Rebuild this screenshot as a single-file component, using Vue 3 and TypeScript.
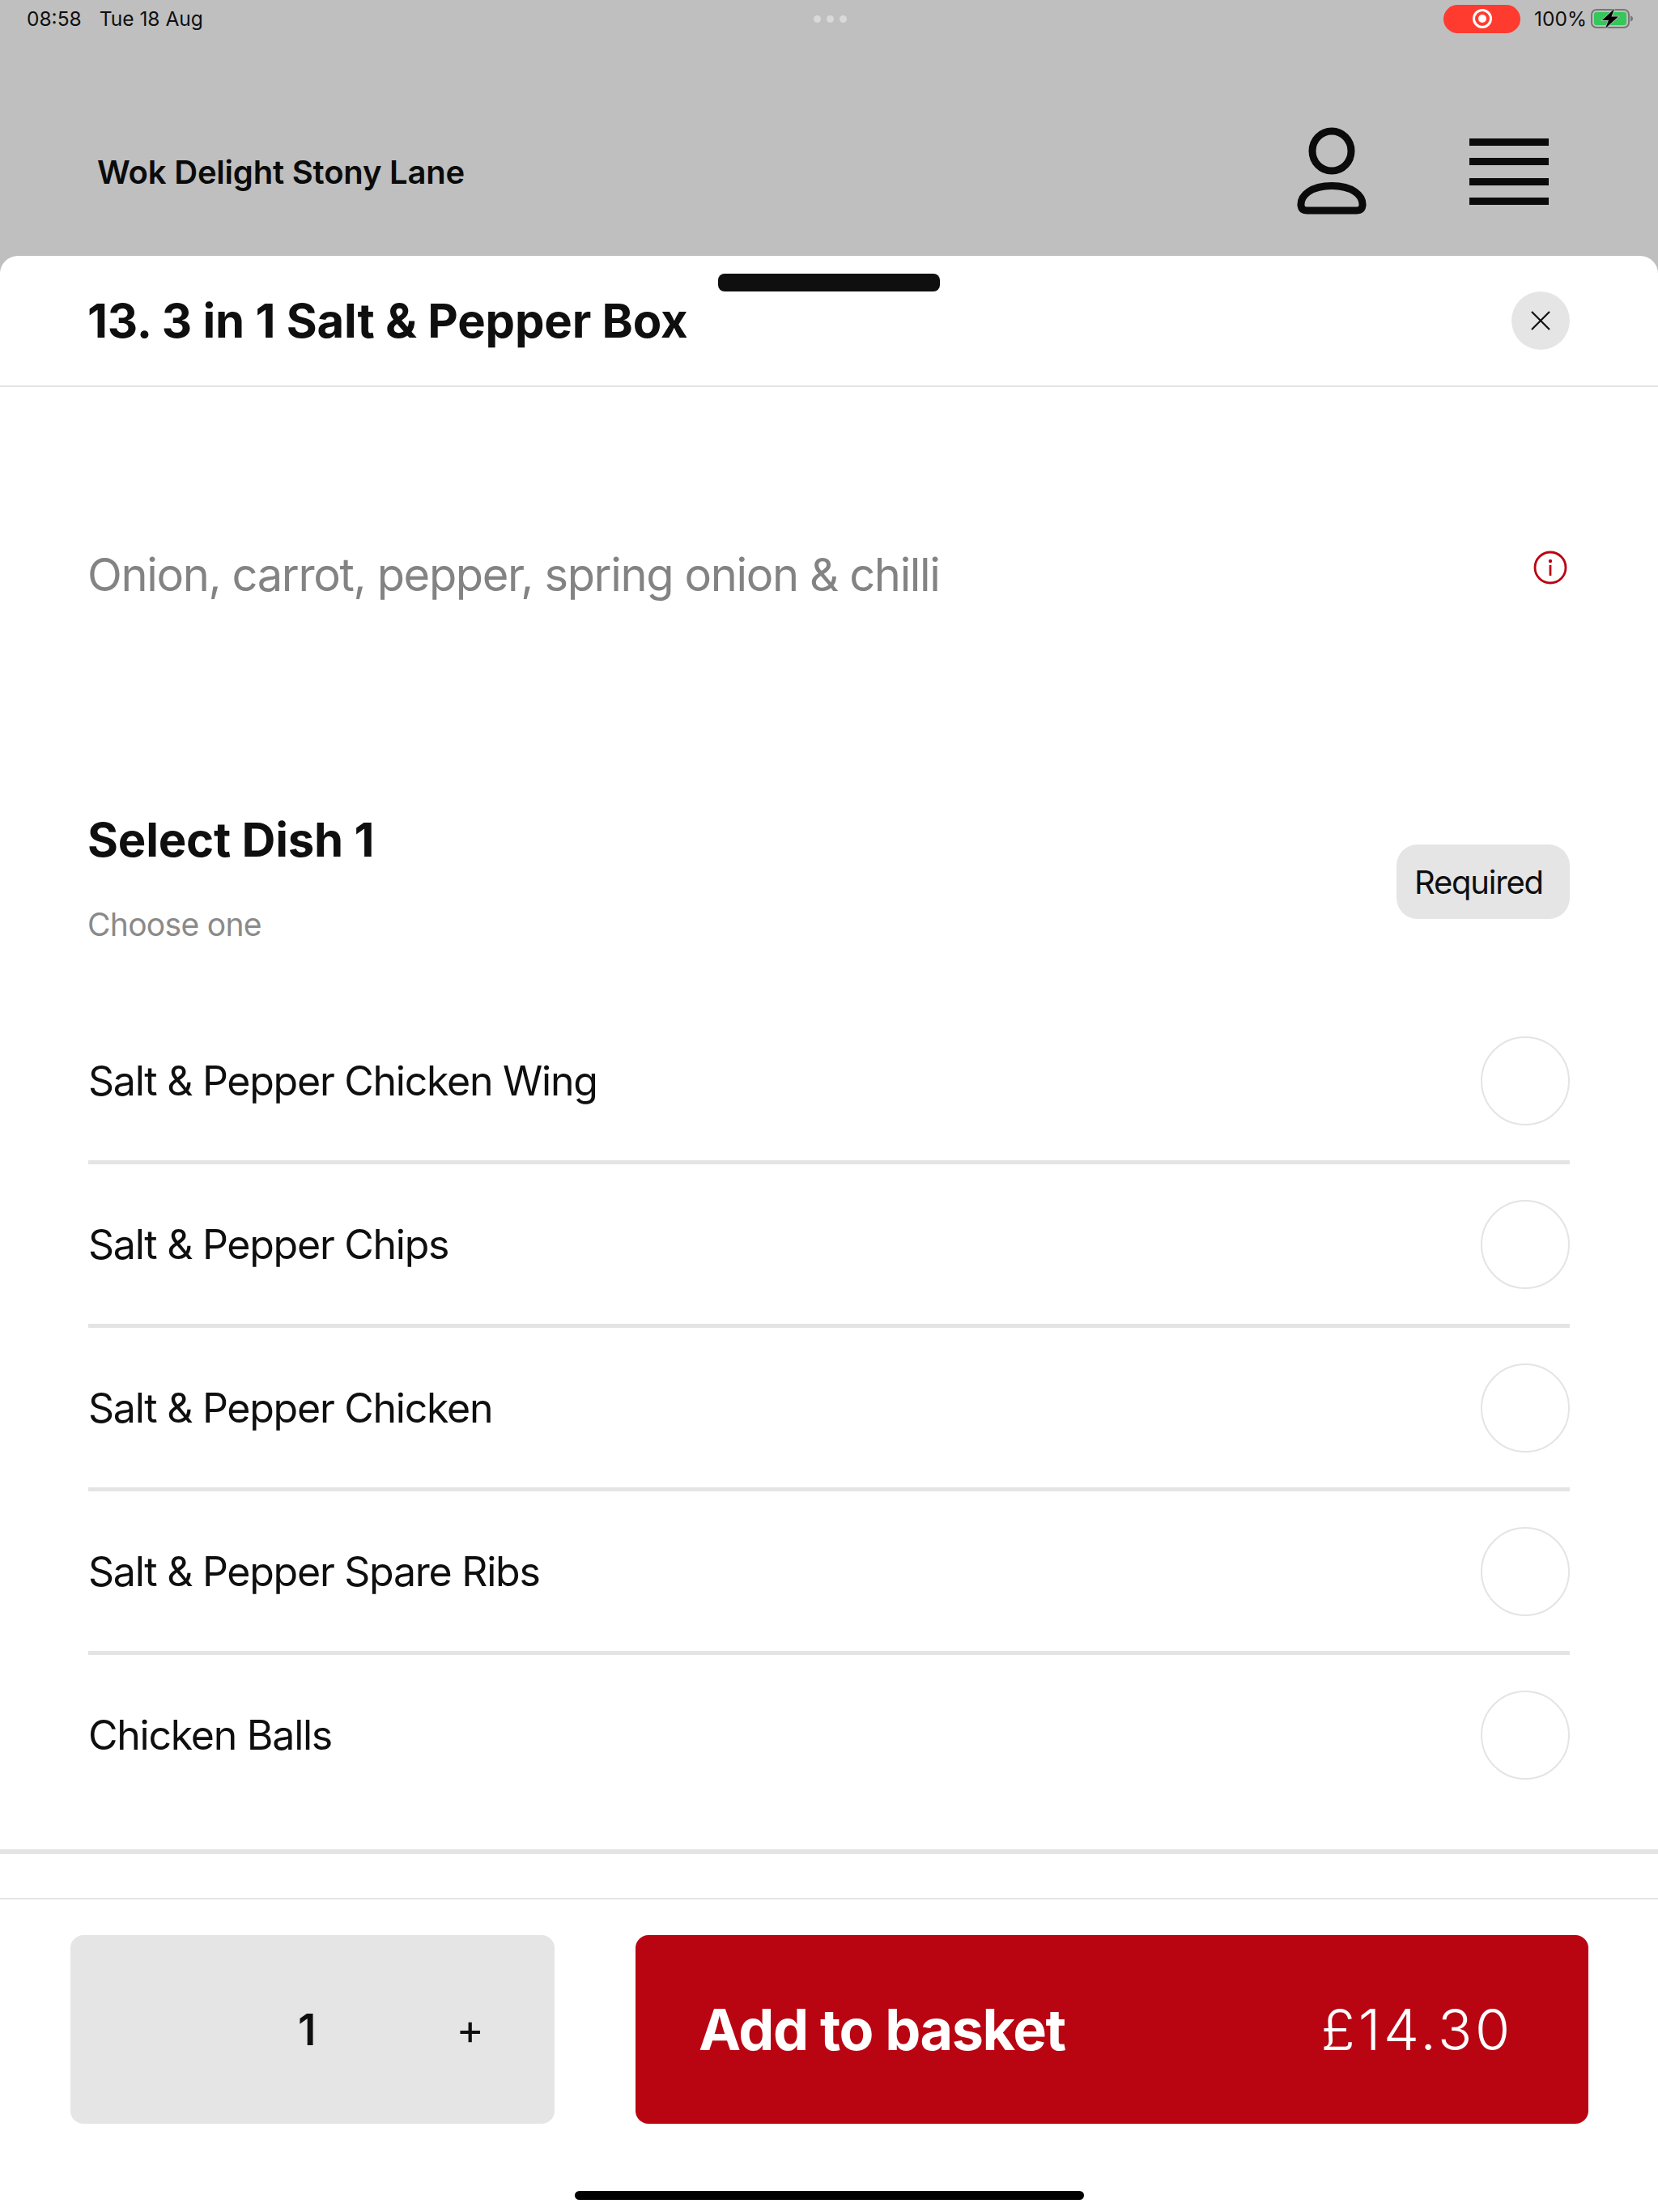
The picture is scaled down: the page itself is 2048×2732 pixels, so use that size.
<script setup lang="ts">
const dishes: string[] = [
  'Salt & Pepper Chicken Wing',
  'Salt & Pepper Chips',
  'Salt & Pepper Chicken',
  'Salt & Pepper Spare Ribs',
  'Chicken Balls'
]
</script>

<template>
  <div class="page">
    <!-- iPad status bar -->
    <div class="status">
      <div class="status-left">
        <span>08:58</span>
        <span>Tue 18 Aug</span>
      </div>
      <div class="status-dots"><i></i><i></i><i></i></div>
      <div class="status-right">
        <span class="rec">
          <svg width="26" height="26" viewBox="0 0 26 26">
            <circle cx="13" cy="13" r="10.5" fill="none" stroke="#fff" stroke-width="3" />
            <circle cx="13" cy="13" r="5" fill="#fff" />
          </svg>
        </span>
        <span class="pct">100%</span>
        <svg class="battery" width="53" height="24" viewBox="0 0 53 24">
          <rect x="1" y="1" width="46" height="22" rx="6" fill="none" stroke="#777" stroke-width="2" />
          <rect x="4" y="4" width="40" height="16" rx="3" fill="#34c759" />
          <path d="M49 8.500c2 .5 3 1.800 3 3.500s-1 3-3 3.500z" fill="#777" />
          <path d="M29 0 L14 14 H22 L18 24 L34 9.500 H25.500 Z" fill="#000" stroke="#bfbfbf" stroke-width="1.500" paint-order="stroke" />
        </svg>
      </div>
    </div>

    <!-- shop header, dimmed behind the sheet -->
    <header class="topbar">
      <div class="shop">Wok Delight Stony Lane</div>
      <svg class="user" width="86" height="108" viewBox="0 0 86 108">
        <ellipse cx="43" cy="29.500" rx="24" ry="24.500" fill="none" stroke="#0b0b0b" stroke-width="9" />
        <path d="M5 97 C4 84 18 72.500 43 72.500 C68 72.500 82 84 81 97 C80.500 101 78 103 74 103 H12 C8 103 5.500 101 5 97 Z" fill="none" stroke="#0b0b0b" stroke-width="9" />
      </svg>
      <div class="burger"><i></i><i></i><i></i><i></i></div>
    </header>

    <main class="sheet">
      <div class="handle"></div>

      <div class="sheet-head">
        <h1>13. 3 in 1 Salt &amp; Pepper Box</h1>
        <button class="close" type="button">
          <svg width="26" height="26" viewBox="0 0 26 26">
            <path d="M2 2 L24 24 M24 2 L2 24" stroke="#111" stroke-width="2.200" fill="none" />
          </svg>
        </button>
      </div>

      <div class="desc">
        <p>Onion, carrot, pepper, spring onion &amp; chilli</p>
        <svg class="info" width="42" height="42" viewBox="0 0 42 42">
          <circle cx="21" cy="21" r="19" fill="none" stroke="#b90512" stroke-width="2.800" />
          <circle cx="21" cy="13" r="2.200" fill="#b90512" />
          <rect x="19.600" y="18" width="2.800" height="13" fill="#b90512" />
        </svg>
      </div>

      <section class="group">
        <div class="group-head">
          <div class="group-text">
            <h2>Select Dish 1</h2>
            <p>Choose one</p>
          </div>
          <span class="required">Required</span>
        </div>

        <ul class="dishes">
          <li v-for="dish in dishes" :key="dish">
            <span>{{ dish }}</span>
            <i class="radio"></i>
          </li>
        </ul>
      </section>

      <div class="thick-rule"></div>

      <footer class="foot">
        <div class="foot-row">
          <div class="qty">
            <span class="qty-num">1</span>
            <span class="qty-plus">+</span>
          </div>
          <button class="add" type="button">
            <span class="add-label">Add to basket</span>
            <span class="add-price">£14.30</span>
          </button>
        </div>
        <div class="home-bar"></div>
      </footer>
    </main>
  </div>
</template>

<style>
html,
body {
  margin: 0;
  background: #fff;
}
</style>

<style scoped>
.page {
  width: 2048px;
  height: 2732px;
  display: flex;
  flex-direction: column;
  background: #bfbfbf;
  color: #0f0f0f;
  font-family: Inter, "Liberation Sans", sans-serif;
  overflow: hidden;
}

/* status bar */
.status {
  height: 46px;
  display: grid;
  grid-template-columns: 1fr auto 1fr;
  align-items: center;
  padding: 0 30px 0 33px;
  font-size: 24.500px;
}

.status-left {
  display: flex;
  gap: 22px;
}

.status-dots {
  display: flex;
  gap: 7px;
}

.status-dots i {
  width: 9px;
  height: 9px;
  border-radius: 50%;
  background: #d9d9d9;
}

.status-right {
  display: flex;
  align-items: center;
  justify-content: flex-end;
}

.rec {
  width: 95px;
  height: 35px;
  border-radius: 18px;
  background: #ff3b30;
  display: flex;
  align-items: center;
  justify-content: center;
}

.pct {
  margin-left: 17px;
  margin-right: 5px;
}

/* top bar */
.topbar {
  height: 270px;
  box-sizing: border-box;
  display: flex;
  align-items: center;
  padding: 62px 135px 0 120px;
}

.shop {
  flex: 1;
  font-size: 40px;
  font-weight: 600;
  letter-spacing: -0.2px;
  color: #0b0b0b;
}

.user {
  margin-right: 127px;
  margin-top: -2px;
}

.burger {
  width: 98px;
  display: flex;
  flex-direction: column;
  gap: 15.500px;
}

.burger i {
  height: 9px;
  background: #0b0b0b;
}

/* sheet */
.sheet {
  position: relative;
  flex: 1;
  display: flex;
  flex-direction: column;
  background: #fff;
  border-radius: 22px 22px 0 0;
}

.handle {
  position: absolute;
  top: 22px;
  left: 887px;
  width: 274px;
  height: 22px;
  border-radius: 8px;
  background: #0f0f0f;
}

.sheet-head {
  height: 160px;
  border-bottom: 2px solid #e4e4e4;
  display: flex;
  align-items: center;
  justify-content: space-between;
  padding: 0 109px 0 108px;
}

.sheet-head h1 {
  margin: 0;
  font-size: 58px;
  font-weight: 700;
  letter-spacing: -0.200px;
}

.close {
  width: 72px;
  height: 72px;
  border: 0;
  padding: 0;
  border-radius: 50%;
  background: #e5e5e5;
  display: flex;
  align-items: center;
  justify-content: center;
}

.desc {
  height: 450px;
  display: flex;
  align-items: center;
  justify-content: space-between;
  padding: 14px 112px 0 108px;
  box-sizing: border-box;
}

.desc p {
  margin: 0;
  font-size: 56px;
  color: #838383;
  letter-spacing: -1.350px;
}

.info {
  margin-top: -18px;
}

.group {
  padding: 70px 109px 0 109px;
}

.group-head {
  height: 238px;
  display: flex;
  align-items: center;
  justify-content: space-between;
  box-sizing: border-box;
  padding-bottom: 56px;
}

.group-text {
  margin-bottom: 9px;
  margin-left: -1px;
}

.group-head h2 {
  margin: 0 0 46px;
  font-size: 58px;
  font-weight: 700;
  line-height: 68px;
  letter-spacing: -0.200px;
}

.group-head p {
  margin: 0;
  font-size: 39px;
  line-height: 50px;
  letter-spacing: -0.700px;
  color: #8a8a8a;
}

.required {
  width: 214px;
  height: 92px;
  box-sizing: border-box;
  padding-left: 22px;
  border-radius: 26px;
  background: #e5e5e5;
  display: flex;
  align-items: center;
  font-size: 40px;
  letter-spacing: -1.200px;
}

.dishes {
  list-style: none;
  margin: 0;
  padding: 0;
}

.dishes li {
  height: 202px;
  box-sizing: border-box;
  display: flex;
  align-items: center;
  justify-content: space-between;
  border-bottom: 5px solid #e4e4e4;
  font-size: 50px;
  letter-spacing: -1.250px;
}

.dishes li:last-child {
  height: 197px;
  border-bottom: 0;
}

.radio {
  width: 110px;
  height: 110px;
  box-sizing: border-box;
  border: 2px solid #e4e4e4;
  border-radius: 50%;
}

.thick-rule {
  height: 6px;
  margin-top: 43px;
  background: #e4e4e4;
}

.foot {
  margin-top: 54px;
  border-top: 2px solid #e4e4e4;
  padding-top: 44px;
}

.foot-row {
  display: flex;
  gap: 100px;
  padding: 0 86px 0 87px;
}

.qty {
  width: 598px;
  height: 233px;
  border-radius: 16px;
  background: #e5e5e5;
  display: flex;
  align-items: center;
  box-sizing: border-box;
  padding-left: 281px;
}

.qty-num {
  font-size: 53px;
  font-weight: 600;
}

.qty-plus {
  margin-left: 173px;
  font-size: 52px;
}

.add {
  flex: 1;
  height: 233px;
  border: 0;
  border-radius: 16px;
  background: #b90512;
  color: #fff;
  font-family: inherit;
  font-size: 70px;
  display: flex;
  align-items: center;
  justify-content: space-between;
  padding: 0 93px 0 78px;
}

.add-label {
  font-weight: 700;
  letter-spacing: -1.400px;
}

.add-price {
  font-weight: 300;
  letter-spacing: 3.700px;
}

.home-bar {
  width: 629px;
  height: 11px;
  margin: 83px auto 0;
  border-radius: 6px;
  background: #000;
}
</style>
